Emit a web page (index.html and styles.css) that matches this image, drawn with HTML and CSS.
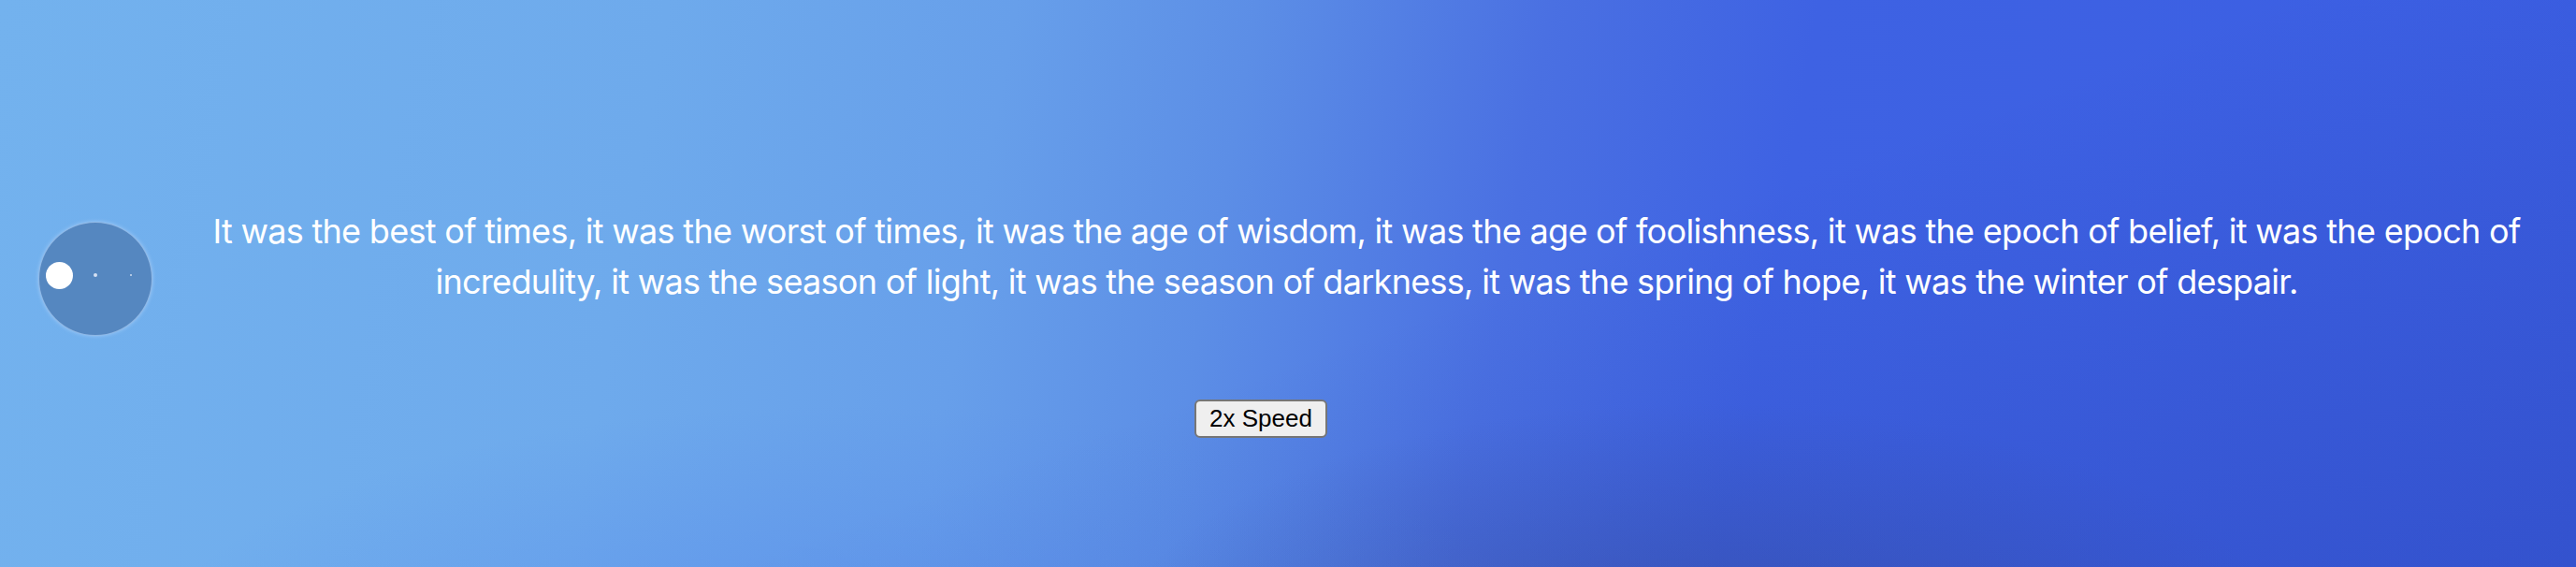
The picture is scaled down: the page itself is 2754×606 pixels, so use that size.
FILE: index.html
```html
<!DOCTYPE html>
<html lang="en">
<head>
<meta charset="utf-8">
<title>Speed reader</title>
<link rel="stylesheet" href="styles.css">
</head>
<body>
<main class="stage">
  <section class="row">
    <div class="orb">
      <span class="dot dot-lg"></span>
      <span class="dot dot-md"></span>
      <span class="dot dot-sm"></span>
    </div>
    <p class="text">It was the best of times, it was the worst of times, it was the age of wisdom, it was the age of foolishness, it was the epoch of belief, it was the epoch of incredulity, it was the season of light, it was the season of darkness, it was the spring of hope, it was the winter of despair.</p>
  </section>
  <div class="controls">
    <button class="speed-btn" type="button">2x Speed</button>
  </div>
</main>
</body>
</html>
```

FILE: styles.css
```css
html, body {
  margin: 0;
  padding: 0;
}

body {
  width: 2754px;
  height: 606px;
  overflow: hidden;
  font-family: Inter, "Noto Sans", sans-serif;
  background:
    radial-gradient(ellipse 900px 380px at 66% 115%, rgba(55, 75, 150, 0.5), rgba(55, 75, 150, 0) 70%),
    radial-gradient(ellipse 1100px 420px at 33% 120%, rgba(85, 135, 235, 0.55), rgba(85, 135, 235, 0) 70%),
    linear-gradient(160deg, rgba(0, 0, 0, 0) 55%, rgba(25, 40, 130, 0.22) 100%),
    linear-gradient(100deg, #73b2ee 0%, #6eaaec 25%, #679fea 38%, #5c8ee6 47%, #4a70e2 58%, #3e62e3 68%, #3b5ee3 100%);
}

.stage {
  display: flex;
  flex-direction: column;
}

.row {
  display: flex;
  align-items: flex-start;
  padding-top: 220px;
}

.orb {
  box-sizing: border-box;
  flex: none;
  width: 122px;
  height: 122px;
  margin-left: 41px;
  margin-top: 17px;
  border-radius: 50%;
  background: #5587c0;
  border: 1px solid rgba(170, 205, 245, 0.7);
  box-shadow: 0 0 4px rgba(190, 220, 255, 0.6);
  display: flex;
  align-items: center;
  padding-left: 7px;
  padding-bottom: 8px;
}

.dot {
  display: block;
  border-radius: 50%;
  flex: none;
}

.dot-lg {
  width: 29px;
  height: 29px;
  background: #ffffff;
}

.dot-md {
  width: 4px;
  height: 4px;
  margin-left: 22px;
  background: rgba(235, 240, 250, 0.85);
}

.dot-sm {
  width: 2px;
  height: 2px;
  margin-left: 35px;
  background: rgba(235, 240, 250, 0.8);
}

.text {
  flex: 1;
  margin: 0 0 0 5px;
  color: #ffffff;
  font-size: 36px;
  line-height: 54px;
  letter-spacing: -0.7px;
  text-align: center;
}

.controls {
  display: flex;
  justify-content: center;
  padding-top: 68px;
  padding-right: 58px;
}

.speed-btn {
  box-sizing: border-box;
  width: 142px;
  height: 41px;
  padding: 0;
  font-family: "Liberation Sans", Arial, sans-serif;
  font-size: 26px;
  color: #000000;
  background: #efefef;
  border: 2px solid #767676;
  border-radius: 6px;
}
```
